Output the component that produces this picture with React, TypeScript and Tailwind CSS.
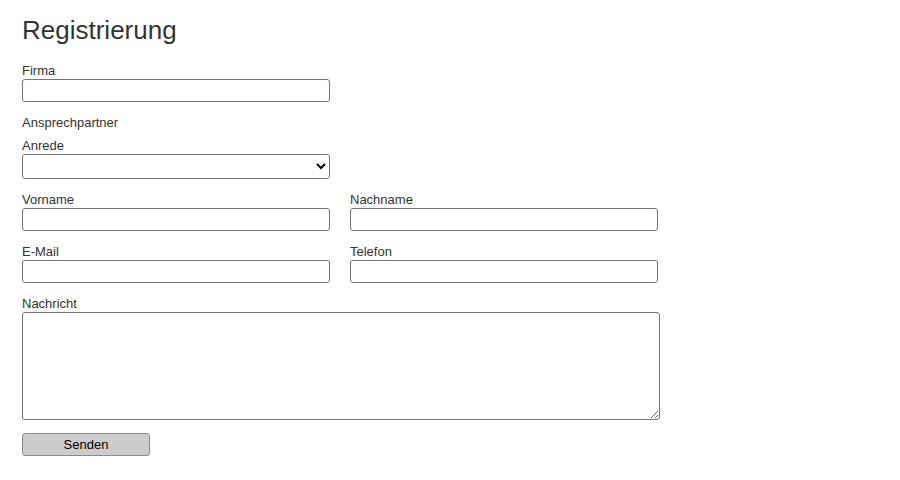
import { useState } from "react";

const labelClass = "block pt-px text-[13px] leading-[15px] text-[#333]";
const fieldClass =
  "mt-px block h-[23px] w-[308px] rounded-[3px] border border-[#767676] bg-white px-[2px] text-[13px] text-black outline-none";

function Field({ id, label, type = "text" }: { id: string; label: string; type?: string }) {
  return (
    <div>
      <label htmlFor={id} className={labelClass}>
        {label}
      </label>
      <input id={id} type={type} className={fieldClass} />
    </div>
  );
}

export default function App() {
  const [anrede, setAnrede] = useState("");

  return (
    <div className="min-h-[480px] bg-white pl-[22px] pt-[15px] font-['Liberation_Sans',Arial,sans-serif] text-[#333]">
      <h1 className="text-[26px] leading-[30px] font-normal text-[#333]">Registrierung</h1>

      <form className="flex flex-col" onSubmit={(e) => e.preventDefault()}>
        {/* Firma */}
        <div className="mt-[17px]">
          <Field id="firma" label="Firma" />
        </div>

        <p className="mt-[12px] pt-px text-[13px] leading-[15px]">Ansprechpartner</p>

        {/* Anrede */}
        <div className="mt-[7px]">
          <label htmlFor="anrede" className={labelClass}>
            Anrede
          </label>
          <select
            id="anrede"
            value={anrede}
            onChange={(e) => setAnrede(e.target.value)}
            className="mt-px block h-[25px] w-[308px] rounded-[3px] border border-[#767676] bg-white text-[13px] text-black"
          >
            <option value=""></option>
            <option value="herr">Herr</option>
            <option value="frau">Frau</option>
          </select>
        </div>

        <div className="mt-[12px] grid w-[636px] grid-cols-[308px_308px] gap-x-[20px] gap-y-[12px]">
          <Field id="vorname" label="Vorname" />
          <Field id="nachname" label="Nachname" />
          <Field id="email" label="E-Mail" type="email" />
          <Field id="telefon" label="Telefon" type="tel" />
        </div>

        {/* Nachricht */}
        <div className="mt-[12px]">
          <label htmlFor="nachricht" className={labelClass}>
            Nachricht
          </label>
          <textarea
            id="nachricht"
            className="mt-px block h-[108px] w-[638px] rounded-[3px] border border-[#767676] bg-white p-[2px] text-[13px] text-black outline-none"
          />
        </div>

        <div className="mt-[12px]">
          <button
            type="submit"
            className="h-[23px] w-[128px] rounded-[3px] border border-[#8a8a8a] bg-[#cccccc] text-[13px] leading-[21px] text-black"
          >
            Senden
          </button>
        </div>
      </form>
    </div>
  );
}
